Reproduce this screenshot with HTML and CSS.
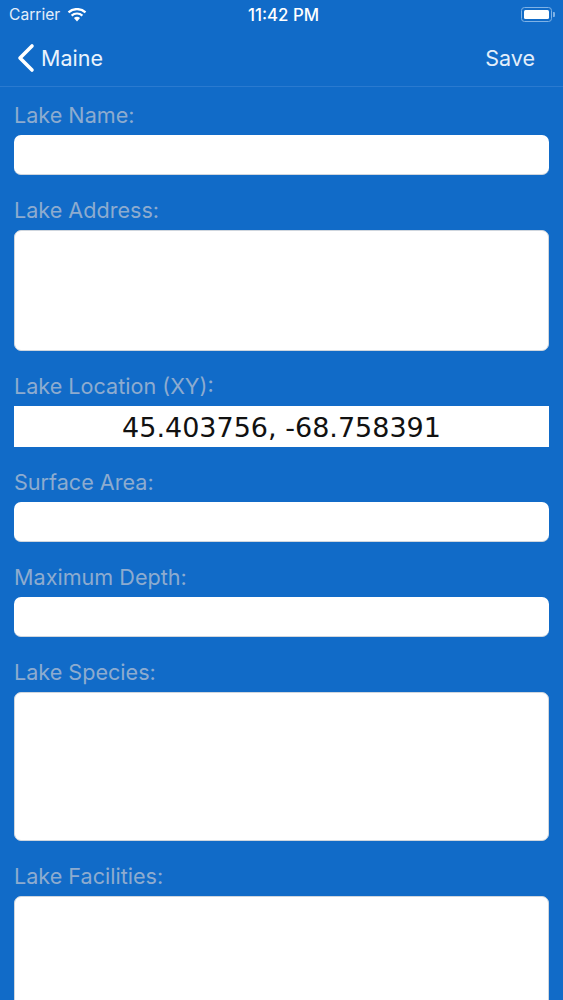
FILE: index.html
```html
<!DOCTYPE html>
<html lang="en">
<head>
    <meta charset="UTF-8">
    <meta name="viewport" content="width=device-width, initial-scale=1.0">
    <title>Edit Lake</title>
    <link rel="stylesheet" href="styles.css">
</head>
<body>
    <div class="screen">
        <div class="status-bar">
            <div class="status-left">
                <span class="carrier">Carrier</span>
                <svg class="wifi" width="20" height="14" viewBox="0 0 20 14">
                    <path d="M10 13.6 L6.9 10.1 A4.6 4.6 0 0 1 13.1 10.1 Z" fill="#fff"/>
                    <path d="M4.6 7.6 A8 8 0 0 1 15.4 7.6" fill="none" stroke="#fff" stroke-width="2.2"/>
                    <path d="M1.5 4.4 A12.4 12.4 0 0 1 18.5 4.4" fill="none" stroke="#fff" stroke-width="2.2"/>
                </svg>
            </div>
            <span class="clock">11:42 PM</span>
            <div class="battery">
                <div class="battery-body"><div class="battery-fill"></div></div>
                <div class="battery-cap"></div>
            </div>
        </div>
        <div class="nav-bar">
            <div class="nav-back">
                <svg width="19" height="30" viewBox="0 0 19 30">
                    <path d="M16 3 L4 15 L16 27" fill="none" stroke="#fff" stroke-width="3.6" stroke-linecap="round" stroke-linejoin="round"/>
                </svg>
                <span>Maine</span>
            </div>
            <span class="nav-save">Save</span>
        </div>

        <div class="form">
            <label class="field-label">Lake Name:</label>
            <div class="field"></div>

            <label class="field-label">Lake Address:</label>
            <div class="field field-address"></div>

            <label class="field-label">Lake Location (XY):</label>
            <div class="field-location">45.403756, -68.758391</div>

            <label class="field-label">Surface Area:</label>
            <div class="field"></div>

            <label class="field-label">Maximum Depth:</label>
            <div class="field"></div>

            <label class="field-label">Lake Species:</label>
            <div class="field field-species"></div>

            <label class="field-label">Lake Facilities:</label>
            <div class="field field-facilities"></div>
        </div>
    </div>
</body>
</html>
```
FILE: styles.css
```css
html, body {
    margin: 0;
    padding: 0;
    height: 1000px;
    overflow: hidden;
}
body {
    font-family: Inter, "Noto Sans", sans-serif;
    background-color: #116bc8;
}
.screen {
    width: 563px;
    height: 1000px;
    overflow: hidden;
}

/* Status bar */
.status-bar {
    height: 29px;
    display: flex;
    align-items: center;
    justify-content: space-between;
    padding: 0 8px 0 9px;
    position: relative;
    color: #fff;
}
.status-left {
    display: flex;
    align-items: center;
    gap: 7px;
}
.carrier {
    font-size: 15.6px;
    color: #e3eefa;
}
.clock {
    position: absolute;
    left: 4px;
    right: 0;
    text-align: center;
    font-size: 16.8px;
    font-weight: 500;
}
.battery {
    display: flex;
    align-items: center;
    gap: 1px;
}
.battery-body {
    width: 31px;
    height: 15px;
    box-sizing: border-box;
    border: 1px solid #7fb2e6;
    border-radius: 3.5px;
    padding: 2px;
}
.battery-fill {
    height: 100%;
    background: #fff;
    border-radius: 1.5px;
}
.battery-cap {
    width: 2px;
    height: 5px;
    background: #7fb2e6;
    border-radius: 0 1px 1px 0;
}

/* Nav bar */
.nav-bar {
    height: 57px;
    border-bottom: 1px solid #2a7ad0;
    display: flex;
    align-items: center;
    justify-content: space-between;
    padding: 0 28px 0 16px;
}
.nav-back {
    display: flex;
    align-items: center;
    gap: 6px;
    color: #eaf3fc;
    font-size: 21.5px;
}
.nav-save {
    color: #e3eefa;
    font-size: 21.5px;
}

/* Form */
.form {
    padding: 0 14px;
}
.field-label {
    display: block;
    height: 55px;
    box-sizing: border-box;
    padding-top: 22px;
    line-height: 26px;
    font-size: 21.6px;
    color: #8dabcf;
}
.form .field-label:first-child {
    height: 48px;
    padding-top: 15px;
}
.field {
    height: 40px;
    box-sizing: border-box;
    background: #fff;
    border-radius: 7px;
    border-bottom: 1px solid #cfd6de;
}
.field-address {
    height: 121px;
    border: 1px solid #cfd6de;
}
.field-species {
    height: 149px;
    border: 1px solid #cfd6de;
}
.field-facilities {
    height: 149px;
    border: 1px solid #cfd6de;
}
.field-location {
    height: 41px;
    line-height: 44px;
    background: #fff;
    text-align: center;
    color: #111;
    font-family: "DejaVu Sans", sans-serif;
    font-size: 27px;
}
```
